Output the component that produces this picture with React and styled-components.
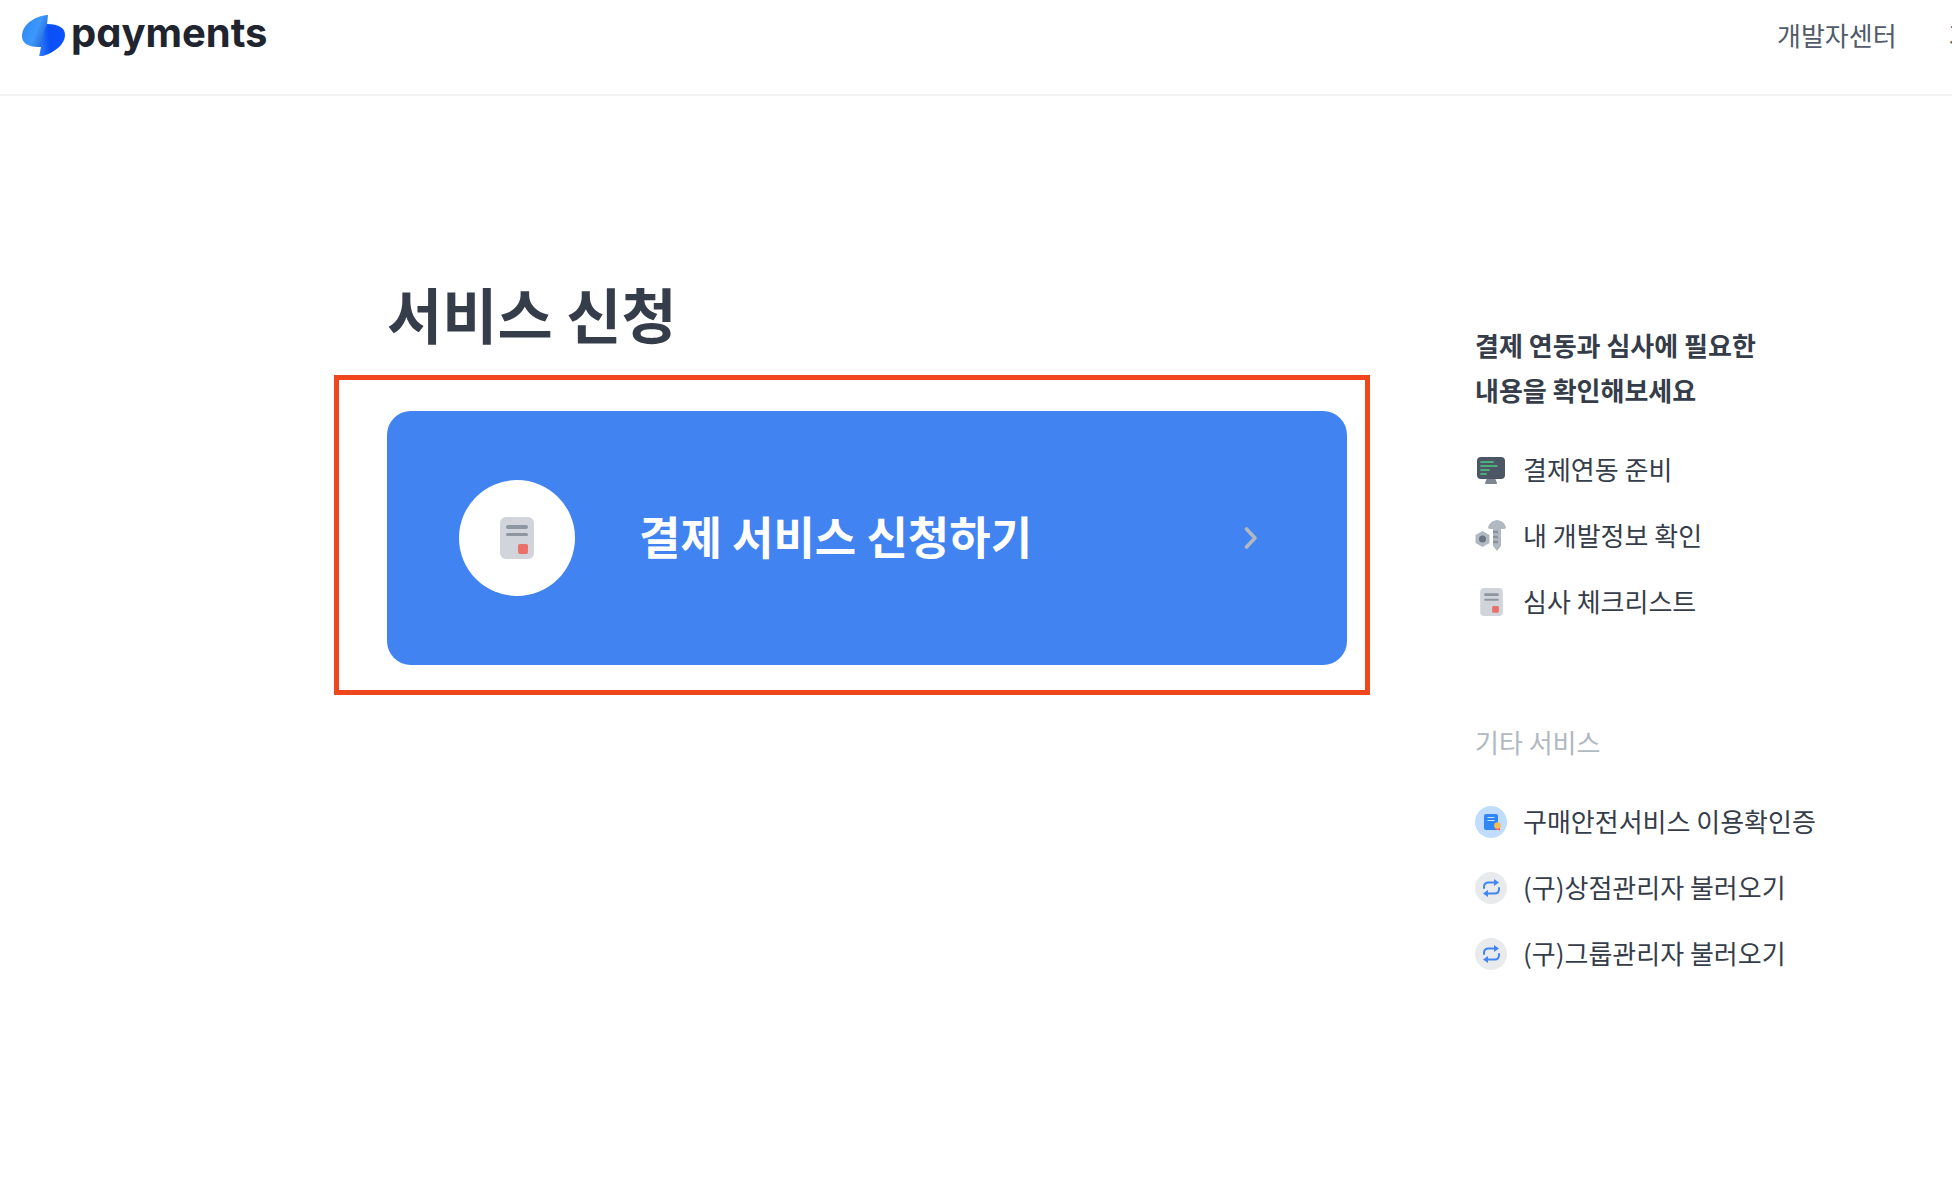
import React from "react";
import styled, { createGlobalStyle } from "styled-components";

const GlobalStyle = createGlobalStyle`
  *, *::before, *::after { box-sizing: border-box; }
  body {
    margin: 0;
    background: #ffffff;
    color: #353d4a;
    font-family: "Noto Sans CJK KR", "Noto Sans", sans-serif;
    font-size: 26px;
    overflow-x: hidden;
  }
  h1, h2, p, ul { margin: 0; padding: 0; }
  ul { list-style: none; }
  a { color: inherit; text-decoration: none; }
  svg { display: block; flex: none; }
`;

const Header = styled.header`
  display: flex;
  justify-content: space-between;
  align-items: flex-start;
  height: 96px;
  padding: 12px 0 0 20px;
  border-bottom: 2px solid #f2f3f4;
  overflow: hidden;
`;

const Brand = styled.a`
  display: flex;
  align-items: center;
  gap: 4px;
  height: 46px;
`;

const BrandName = styled.span`
  padding-bottom: 4px;
  color: #20242f;
  font-family: Inter, sans-serif;
  font-feature-settings: "cv11";
  font-size: 40px;
  font-weight: 700;
  line-height: 40px;
`;

const Nav = styled.nav`
  display: flex;
  gap: 52px;
  width: 175px;
  flex: none;
  color: #515b6b;
  line-height: 46px;
  white-space: nowrap;
`;

const Main = styled.main`
  display: grid;
  grid-template-columns: minmax(0, 1fr) 344px;
  column-gap: 105px;
  align-items: start;
  padding: 177px 133px 177px 334px;
`;

const Title = styled.h1`
  padding-left: 53px;
  margin-bottom: 22px;
  font-size: 60px;
  font-weight: 700;
  line-height: 80px;
`;

const Highlight = styled.div`
  padding: 31px 18px 25px 48px;
  border: 5px solid #f0461e;
`;

const ApplyButton = styled.button`
  display: flex;
  align-items: center;
  gap: 64px;
  width: 100%;
  height: 254px;
  padding: 0 87px 0 72px;
  border: 0;
  border-radius: 24px;
  background: #4183f1;
  color: #ffffff;
  font: inherit;
  font-size: 45px;
  font-weight: 700;
  line-height: 60px;
  text-align: left;
  cursor: pointer;
`;

const ApplyIcon = styled.span`
  display: flex;
  align-items: center;
  justify-content: center;
  flex: none;
  width: 116px;
  height: 116px;
  border-radius: 50%;
  background: #ffffff;
`;

const ApplyLabel = styled.span`
  flex: 1;
  padding-bottom: 4px;
  white-space: nowrap;
`;

const Aside = styled.aside`
  padding-top: 49px;
  white-space: nowrap;
`;

const Section = styled.section`
  & + & { margin-top: 101px; }
`;

const SectionTitle = styled.h2`
  margin-bottom: 42px;
  color: ${(p) => (p.$muted ? "#b0b8c1" : "inherit")};
  font-size: 26px;
  font-weight: ${(p) => (p.$muted ? 400 : 700)};
  line-height: 45px;
`;

const LinkList = styled.ul`
  display: grid;
  gap: 34px;
`;

const LinkItem = styled.a`
  display: flex;
  align-items: flex-start;
  gap: 16px;
  height: 32px;
  line-height: 30px;
`;

const LogoMark = () => (
  <svg width="47" height="42" viewBox="0 0 47 42" aria-hidden="true">
    <defs>
      <linearGradient id="wingLeft" x1="0" y1="0.2" x2="1" y2="0.7">
        <stop offset="0" stopColor="#2b86f8" />
        <stop offset="0.55" stopColor="#3d98fb" />
        <stop offset="1" stopColor="#1f62d8" />
      </linearGradient>
      <linearGradient id="wingRight" x1="0" y1="0.5" x2="1" y2="0.4">
        <stop offset="0" stopColor="#2f7dfa" />
        <stop offset="0.4" stopColor="#0a50f5" />
        <stop offset="1" stopColor="#0a52ff" />
      </linearGradient>
    </defs>
    <path d="M28 1C14 2 2 11 2 22c0 7 6 11 16 11h4l3-3z" fill="url(#wingLeft)" />
    <path d="M27 10c12 0 18 4 18 11 0 10-12 19-26 22L24 18z" fill="url(#wingRight)" />
  </svg>
);

const DocumentIcon = ({ width, height }) => (
  <svg width={width} height={height} viewBox="0 0 34 42" aria-hidden="true">
    <rect width="34" height="42" rx="6" fill="#d1d5db" />
    <rect x="6" y="8" width="22" height="4" rx="2" fill="#8e96a2" />
    <rect x="6" y="16" width="22" height="3" rx="1.5" fill="#8e96a2" />
    <rect x="18" y="27" width="10" height="10" rx="2" fill="#ea7068" />
  </svg>
);

const IconSlot = styled.span`
  display: flex;
  align-items: center;
  justify-content: center;
  flex: none;
  width: 32px;
  height: 32px;
`;

const MonitorIcon = () => (
  <svg width="32" height="32" viewBox="0 0 32 32" aria-hidden="true">
    <path d="M12 24h8l2 5q.5 1-1 1H11q-1.500 0-1-1z" fill="#7d8591" />
    <rect x="2" y="3" width="28" height="22" rx="4" fill="#4d5664" />
    <g stroke="#4bae7c" strokeWidth="1.800" strokeLinecap="round">
      <path d="M6 8h12M6 12h16M6 16h8M6 20h5" />
    </g>
  </svg>
);

const ToolsIcon = () => (
  <svg width="32" height="32" viewBox="0 0 32 32" aria-hidden="true">
    <path d="M13 7Q15 1 22 0q7 1 9 7 0 2-2 2h-3v17l-4 5-4-5V9h-3q-2 0-2-2z" fill="#b0b8c1" />
    <path d="M18 12h5M18 17h5M18 22h5" stroke="#8a929e" strokeWidth="2.500" />
    <path d="M7.500 11l7 4v8l-7 4-7-4v-8z" fill="#b0b8c1" strokeLinejoin="round" />
    <circle cx="7.500" cy="19" r="3.500" fill="#6b7482" />
  </svg>
);

const CertificateIcon = () => (
  <svg width="32" height="32" viewBox="0 0 32 32" aria-hidden="true">
    <circle cx="16" cy="16" r="16" fill="#c1dcfe" />
    <rect x="9" y="8" width="14" height="16" rx="2" fill="#2f86f8" />
    <path d="M13 11.500h6M13 14.500h6" stroke="#c9e1ff" strokeWidth="1.200" strokeLinecap="round" />
    <path d="M20 21h5v3.500l-2.500-1-2.500 1z" fill="#ee5d55" />
    <circle cx="22.500" cy="19.500" r="3.300" fill="#f8bd50" />
  </svg>
);

const RefreshIcon = () => (
  <svg width="32" height="32" viewBox="0 0 32 32" aria-hidden="true">
    <circle cx="16" cy="16" r="16" fill="#e8eaec" />
    <g fill="none" stroke="#4285f4" strokeWidth="2" strokeLinecap="round">
      <path d="M9 16v-1q0-4.500 4.500-4.500H20" />
      <path d="M24 16v1q0 4.500-4.500 4.500H12" />
    </g>
    <path d="M19 7l5 3.500-5 3.500zM13 18l-5 3.500 5 3.500z" fill="#4285f4" />
  </svg>
);

const ChevronIcon = () => (
  <svg width="18" height="26" viewBox="0 0 18 26" aria-hidden="true">
    <path d="M4.500 4L13 13l-8.500 9" fill="none" stroke="#b3b8c0" strokeWidth="3.600" strokeLinecap="round" strokeLinejoin="round" />
  </svg>
);

const guideLinks = [
  { label: "결제연동 준비", icon: <MonitorIcon /> },
  { label: "내 개발정보 확인", icon: <ToolsIcon /> },
  { label: "심사 체크리스트", icon: <DocumentIcon width={23} height={28} /> },
];

const otherLinks = [
  { label: "구매안전서비스 이용확인증", icon: <CertificateIcon /> },
  { label: "(구)상점관리자 불러오기", icon: <RefreshIcon /> },
  { label: "(구)그룹관리자 불러오기", icon: <RefreshIcon /> },
];

const Links = ({ items }) => (
  <LinkList>
    {items.map((item) => (
      <li key={item.label}>
        <LinkItem href="#">
          <IconSlot>{item.icon}</IconSlot>
          {item.label}
        </LinkItem>
      </li>
    ))}
  </LinkList>
);

export default function App() {
  return (
    <>
      <GlobalStyle />
      <Header>
        <Brand href="#">
          <LogoMark />
          <BrandName>payments</BrandName>
        </Brand>
        <Nav>
          <a href="#">개발자센터</a>
          <a href="#">가이드</a>
        </Nav>
      </Header>
      <Main>
        <div>
          <Title>서비스 신청</Title>
          <Highlight>
            <ApplyButton type="button">
              <ApplyIcon>
                <DocumentIcon width={34} height={42} />
              </ApplyIcon>
              <ApplyLabel>결제 서비스 신청하기</ApplyLabel>
              <ChevronIcon />
            </ApplyButton>
          </Highlight>
        </div>
        <Aside>
          <Section>
            <SectionTitle>
              결제 연동과 심사에 필요한
              <br />
              내용을 확인해보세요
            </SectionTitle>
            <Links items={guideLinks} />
          </Section>
          <Section>
            <SectionTitle $muted>기타 서비스</SectionTitle>
            <Links items={otherLinks} />
          </Section>
        </Aside>
      </Main>
    </>
  );
}
